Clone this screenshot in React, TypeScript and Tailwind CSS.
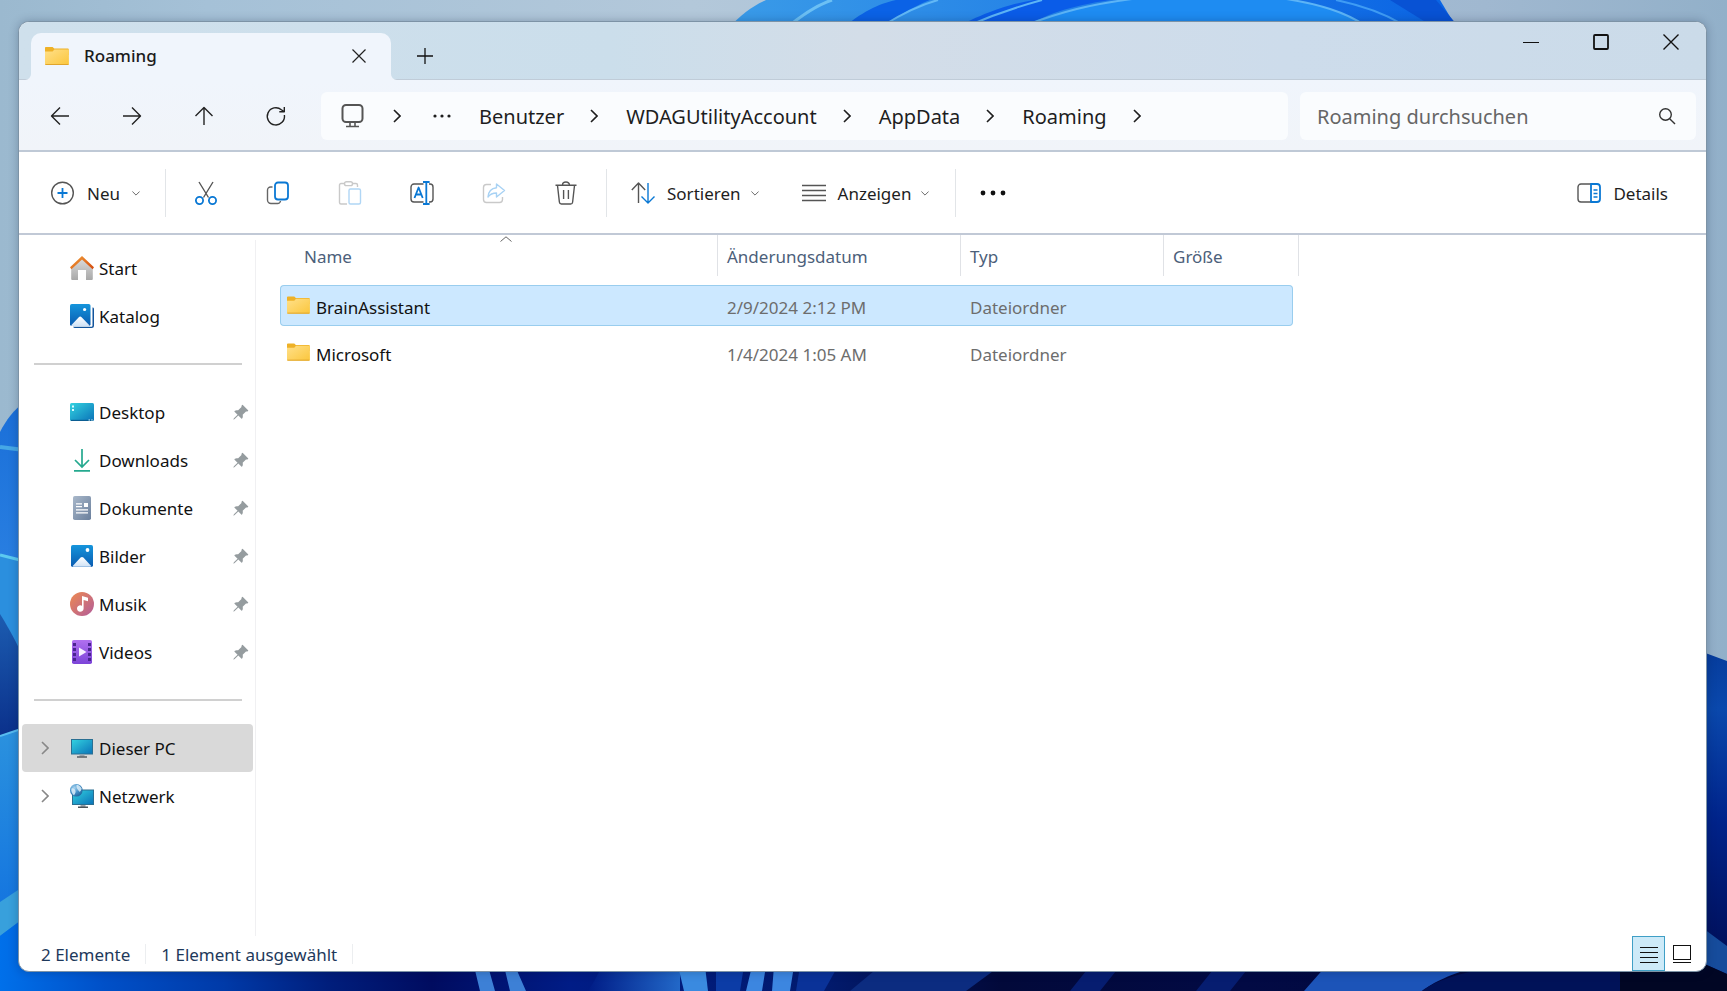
import { useState } from 'react';
import type { ReactNode } from 'react';
import { BsPinAngleFill } from 'react-icons/bs';
import clsx from 'clsx';

function Wallpaper() {
  return (
    <svg
      className="absolute inset-0 h-full w-full"
      viewBox="0 0 1727 991"
      preserveAspectRatio="none"
      aria-hidden="true"
    >
      <defs>
        <linearGradient id="sky" x1="0" y1="0" x2="1" y2="0">
          <stop offset="0" stopColor="#9bb9cf" />
          <stop offset="0.12" stopColor="#a5c1d7" />
          <stop offset="0.4" stopColor="#b3c8da" />
          <stop offset="0.86" stopColor="#a0b8d0" />
          <stop offset="1" stopColor="#92b0c9" />
        </linearGradient>
        <linearGradient id="floor" x1="0" y1="0" x2="1" y2="0">
          <stop offset="0" stopColor="#0070ea" />
          <stop offset="0.06" stopColor="#0050c8" />
          <stop offset="0.13" stopColor="#003aa8" />
          <stop offset="0.19" stopColor="#001e7c" />
          <stop offset="0.25" stopColor="#000c60" />
          <stop offset="0.33" stopColor="#001c86" />
          <stop offset="0.48" stopColor="#021a6c" />
          <stop offset="0.58" stopColor="#02093a" />
          <stop offset="0.72" stopColor="#020a44" />
          <stop offset="1" stopColor="#010838" />
        </linearGradient>
        <linearGradient id="petal" x1="0" y1="0" x2="1" y2="0">
          <stop offset="0" stopColor="#3a9be8" />
          <stop offset="1" stopColor="#0a64e4" />
        </linearGradient>
        <linearGradient id="petalLow" x1="0" y1="0" x2="1" y2="0">
          <stop offset="0" stopColor="#001c86" />
          <stop offset="1" stopColor="#2268c8" />
        </linearGradient>
        <linearGradient id="leftTop" x1="0" y1="0" x2="0" y2="1">
          <stop offset="0" stopColor="#1a6fd8" />
          <stop offset="0.3" stopColor="#2a80e2" />
          <stop offset="1" stopColor="#0066e0" />
        </linearGradient>
        <linearGradient id="leftDeep" x1="0" y1="0" x2="0" y2="1">
          <stop offset="0" stopColor="#1c5cb0" />
          <stop offset="1" stopColor="#0a2f8a" />
        </linearGradient>
        <linearGradient id="leftLow" x1="0" y1="0" x2="0" y2="1">
          <stop offset="0" stopColor="#2b92de" />
          <stop offset="1" stopColor="#0a68e0" />
        </linearGradient>
        <linearGradient id="rightDeep" x1="0" y1="0" x2="0" y2="1">
          <stop offset="0" stopColor="#063c9c" />
          <stop offset="0.17" stopColor="#0a48ac" />
          <stop offset="0.5" stopColor="#00238a" />
          <stop offset="1" stopColor="#000a4c" />
        </linearGradient>
      </defs>
      <rect width="1727" height="991" fill="url(#sky)" />

      {/* bloom above the window */}
      <path d="M726 30C742 14 752 6 766 0H1440L1458 30Z" fill="url(#petal)" />
      <path d="M784 30C805 12 820 4 832 0" stroke="#6cc0f4" strokeWidth="3" fill="none" />
      <path d="M840 30C862 12 878 4 896 0H930C910 8 894 18 882 30Z" fill="#0b62e6" />
      <path d="M884 25C905 12 920 5 938 0" stroke="#62b8f6" strokeWidth="2" fill="none" />
      <path d="M950 30C990 10 1010 4 1034 0H1110C1070 6 1045 14 1020 30Z" fill="#0a5ce8" />
      <path d="M970 25C1000 12 1020 6 1042 0" stroke="#5cb4f6" strokeWidth="2" fill="none" />
      <path d="M1024 26C1060 12 1090 4 1140 -2H1280C1320 4 1345 12 1366 26Z" fill="#1e8cf2" />
      <path d="M1024 26C1060 12 1090 4 1140 -2M1280 -2C1320 4 1345 12 1366 26" stroke="#5cb4f6" strokeWidth="2" fill="none" />
      <path d="M1336 0C1365 6 1385 14 1402 24" stroke="#3f9cf4" strokeWidth="2" fill="none" />
      <path d="M1390 0L1432 26H1458L1436 0Z" fill="#0852d4" />

      {/* left edge */}
      <path d="M0 432C6 420 14 410 24 402V991H0Z" fill="url(#leftTop)" />
      <path d="M0 447L24 450" stroke="#46a8e6" strokeWidth="4" />
      <path d="M0 555L24 561V660L0 618Z" fill="#2b8fde" />
      <path d="M0 555L24 561" stroke="#5ccaf0" strokeWidth="3" />
      <path d="M0 614C10 630 16 642 24 658V740H0Z" fill="url(#leftDeep)" />
      <path d="M0 736L24 728V991H0Z" fill="url(#leftLow)" />
      <path d="M0 736L24 728" stroke="#58bdf0" strokeWidth="2" />
      <path d="M0 902L24 886V918L0 936Z" fill="#38a0dc" />

      {/* bottom edge */}
      <path d="M0 936L24 918L24 966H1727V991H0Z" fill="url(#floor)" />
      <path d="M474 966H488L495 991H480ZM504 966H515L526 991H510Z" fill="#3d80d6" />
      <path d="M602 966H680V991H588C594 982 598 974 602 966Z" fill="url(#petalLow)" />
      <path d="M678 966H705L708 991H684Z" fill="#3a8ae0" />
      <path d="M716 966H744L740 991H716Z" fill="#0c3ca6" />
      <path d="M752 966H766L762 991H746ZM774 966H794L790 991H772Z" fill="#3c86e0" />
      <path d="M800 966H838L824 991H796Z" fill="#0a3298" />
      <path d="M880 966H1000L966 991H850Z" fill="#0c2c80" />
      <path d="M1090 966H1120L1100 991H1070ZM1216 966H1250L1230 991H1196Z" fill="#061d70" />
      <path d="M1326 966H1480C1450 974 1434 982 1422 991H1304Z" fill="#1c54b8" />
      <path d="M1478 970C1450 976 1434 982 1422 991H1640V966Z" fill="#001258" />

      {/* right edge */}
      <path d="M1700 651L1727 661V991H1700Z" fill="url(#rightDeep)" />
      <path d="M1700 926L1727 946V974L1700 962Z" fill="#164c9c" />
      <path d="M1700 962L1727 974V991H1620V966Z" fill="#010624" />
    </svg>
  );
}

function FolderIcon({ className }: { className?: string }) {
  return (
    <svg viewBox="0 0 24 18" className={className} aria-hidden="true">
      <defs>
        <linearGradient id="folder" x1="0" y1="0" x2="1" y2="1">
          <stop offset="0" stopColor="#ffe08a" />
          <stop offset="1" stopColor="#fbc63c" />
        </linearGradient>
      </defs>
      <path d="M0 1C0 .4.4 0 1 0h6.6L9.2 1.6H22.5c.8 0 1.3.5 1.3 1.2V8H0Z" fill="#eeb127" />
      <path d="M0 4.600h7.600L9.400 2.400H23c.6 0 .9.3.9.9V17c0 .6-.4 1-1 1H1c-.6 0-1-.4-1-1Z" fill="url(#folder)" />
      <path d="M.4 17.500h23" stroke="#e0a52c" />
    </svg>
  );
}

function Chevron({ className }: { className?: string }) {
  return (
    <svg viewBox="0 0 8 14" className={className} fill="none" stroke="currentColor" aria-hidden="true">
      <path d="M1 1l6 6-6 6" strokeWidth="1.6" />
    </svg>
  );
}

function ChevronDown() {
  return (
    <svg viewBox="0 0 10 6" className="h-[5px] w-2" fill="none" stroke="#666" aria-hidden="true">
      <path d="M.5.5L5 5 9.500.5" strokeWidth="1.2" />
    </svg>
  );
}

function Glyph({ children, className }: { children: ReactNode; className?: string }) {
  return (
    <svg
      viewBox="0 0 24 24"
      className={clsx('h-6 w-6 shrink-0', className)}
      fill="none"
      stroke="currentColor"
      strokeWidth="1.4"
      strokeLinejoin="round"
      aria-hidden="true"
    >
      {children}
    </svg>
  );
}

const navButtons = [
  { label: 'Zurück', icon: <path d="M21 12H3.500M12 3.500L3.500 12l8.500 8.500" /> },
  { label: 'Vorwärts', icon: <path d="M3 12h17.500M12 3.500l8.500 8.500-8.500 8.500" /> },
  { label: 'Nach oben', icon: <path d="M12 21V3.500M3.500 12L12 3.500l8.500 8.500" /> },
  {
    label: 'Aktualisieren',
    icon: <path d="M20.400 11a8.600 8.600 0 1 1-3-5.300l2.400 1.800M20.300 3v4.700h-5" />,
  },
];

const crumbs = ['Benutzer', 'WDAGUtilityAccount', 'AppData', 'Roaming'];

const commands = [
  {
    label: 'Ausschneiden',
    icon: (
      <>
        <path d="M5 1l9.500 15.500M19 1L9.500 16.500" stroke="#555" />
        <circle cx="5.500" cy="19.500" r="3.600" stroke="#0a78d4" strokeWidth="1.800" />
        <circle cx="18.500" cy="19.500" r="3.600" stroke="#0a78d4" strokeWidth="1.800" />
      </>
    ),
  },
  {
    label: 'Kopieren',
    icon: (
      <>
        <path d="M6.500 6H4.500a3 3 0 0 0-3 3v10a3.500 3.500 0 0 0 3.500 3.500h6.500a3 3 0 0 0 3-2.500" stroke="#666" />
        <rect x="9" y="1.500" width="13" height="17" rx="3" stroke="#0a78d4" strokeWidth="1.800" />
      </>
    ),
  },
  {
    label: 'Einfügen',
    icon: (
      <>
        <path d="M6.500 2.500H3a1.500 1.500 0 0 0-1.500 1.500v17.500A1.500 1.500 0 0 0 3 23h6M14.500 2.500H18a1.500 1.500 0 0 1 1.500 1.500v2" stroke="#c9c9c9" />
        <rect x="6.500" y=".8" width="8" height="3.800" rx="1.900" stroke="#c9c9c9" />
        <rect x="11" y="8" width="11.500" height="15" rx="1.500" stroke="#b0d6f5" />
      </>
    ),
  },
  {
    label: 'Umbenennen',
    icon: (
      <>
        <path d="M13.500 3H4a3 3 0 0 0-3 3v12a3 3 0 0 0 3 3h9.500M19 3h1a3 3 0 0 1 3 3v12a3 3 0 0 1-3 3h-1" stroke="#555" />
        <path d="M16.300 1v22M13 1h6.600M13 23h6.600" stroke="#0a78d4" strokeWidth="1.800" />
        <path d="M4.500 17L8.600 6.500 12.700 17M5.800 13.500h5.600" stroke="#0a78d4" strokeWidth="1.800" />
      </>
    ),
  },
  {
    label: 'Freigeben',
    icon: (
      <>
        <path d="M9 3.500H4.500a3 3 0 0 0-3 3v12a3 3 0 0 0 3 3h13a3 3 0 0 0 3-3V16" stroke="#c9c9c9" />
        <path d="M14.500 3l8 6.500-8 6.500v-4c-4 0-6.500 1.200-8.500 4 .4-5.500 3.500-8.800 8.500-9.300Z" stroke="#a8d2f4" />
      </>
    ),
  },
  {
    label: 'Löschen',
    icon: (
      <>
        <path d="M1.500 4.200h21M3.500 4.500l1.900 16.700A2 2 0 0 0 7.400 23h9.200a2 2 0 0 0 2-1.800l1.900-16.700M8.500 4a3.500 3 0 0 1 7 0M9.600 9v9M14.400 9v9" stroke="#555" />
      </>
    ),
  },
];

function PictureArt({ stacked }: { stacked?: boolean }) {
  return (
    <svg viewBox="0 0 24 24" className="h-6 w-6 shrink-0" aria-hidden="true">
      <defs>
        <linearGradient id="picture" x1="0" y1="0" x2="0" y2="1">
          <stop offset="0" stopColor="#1595dc" />
          <stop offset="1" stopColor="#0a5bb0" />
        </linearGradient>
        <linearGradient id="hill" x1="0" y1="0" x2="0" y2="1">
          <stop offset="0" stopColor="#ffffff" />
          <stop offset="1" stopColor="#cfe2f6" />
        </linearGradient>
      </defs>
      {stacked ? (
        <>
          <path d="M22.500 3.500c1 0 1.500.7 1.500 1.500v16.500a2.500 2.500 0 0 1-2.500 2.500H5a2 2 0 0 1-2-1.200h18.200c.8 0 1.300-.5 1.300-1.300Z" fill="#12549c" />
          <rect width="20.500" height="22" rx="1.800" fill="url(#picture)" />
          <path d="M1 21.500L8.800 13.200c.8-.9 2-.9 2.800 0l8 8.300c-.3.300-.7.500-1.200.5H2.200c-.5 0-.9-.2-1.200-.5Z" fill="url(#hill)" />
          <circle cx="14.600" cy="5.500" r="1.600" fill="#fff" />
        </>
      ) : (
        <>
          <rect x="1" y="1" width="22" height="22" rx="1.800" fill="url(#picture)" />
          <path d="M2.500 22.300L10.600 13.600c.8-.9 2-.9 2.800 0l8 8.700c-.3.300-.6.400-1 .4H3.500c-.4 0-.7-.1-1-.4Z" fill="url(#hill)" />
          <circle cx="17.500" cy="6" r="1.900" fill="#fff" />
        </>
      )}
    </svg>
  );
}

function HomeArt() {
  return (
    <svg viewBox="0 0 24 24" className="h-6 w-6 shrink-0" aria-hidden="true">
      <defs>
        <linearGradient id="wall" x1="0" y1="0" x2="0" y2="1">
          <stop offset="0" stopColor="#dedede" />
          <stop offset="1" stopColor="#a8a8a8" />
        </linearGradient>
        <linearGradient id="roof" x1="0" y1="0" x2="1" y2="1">
          <stop offset="0" stopColor="#f2a13a" />
          <stop offset="1" stopColor="#d4480c" />
        </linearGradient>
      </defs>
      <path d="M1.200 11.500L12 1.500l10.800 10V23a1 1 0 0 1-1 1H16V14H8v10H2.200a1 1 0 0 1-1-1Z" fill="url(#wall)" />
      <path d="M12 0l12 11.300-1.400 2L12 3.500 1.400 13.300l-1.400-2Z" fill="url(#roof)" />
    </svg>
  );
}

function DesktopArt() {
  return (
    <svg viewBox="0 0 24 24" className="h-6 w-6 shrink-0" aria-hidden="true">
      <defs>
        <linearGradient id="screen" x1="0" y1="0" x2="1" y2="1">
          <stop offset="0" stopColor="#33d3e0" />
          <stop offset="1" stopColor="#0a72b8" />
        </linearGradient>
      </defs>
      <rect y="3" width="24" height="18" rx="1.500" fill="url(#screen)" />
      <path d="M1 20.400h22" stroke="#0b5d92" strokeWidth="1.200" />
      <path d="M2 5.500h2v2H2zM2 9h2v2H2z" fill="#d8fbff" />
      <path d="M18.500 19.500h1.500v1h-1.500zM21.200 19.500h1.500v1h-1.500z" fill="#d8fbff" />
    </svg>
  );
}

function DownloadArt() {
  return (
    <svg viewBox="0 0 24 24" className="h-6 w-6 shrink-0" fill="none" stroke="#25a98f" strokeWidth="1.700" aria-hidden="true">
      <path d="M12 1v18M5 12l7 7 7-7M4 22.800h16" />
    </svg>
  );
}

function DocumentArt() {
  return (
    <svg viewBox="0 0 24 24" className="h-6 w-6 shrink-0" aria-hidden="true">
      <defs>
        <linearGradient id="doc" x1="0" y1="0" x2="1" y2="1">
          <stop offset="0" stopColor="#a9b8ca" />
          <stop offset="1" stopColor="#6a7f9c" />
        </linearGradient>
      </defs>
      <rect x="3" width="18" height="24" rx="1.800" fill="url(#doc)" />
      <path d="M6 7.800h6M6 10.600h6M6 13.800h12M6 16.800h12" stroke="#fff" strokeWidth="1.200" />
      <path d="M14 7h4v4h-4z" fill="#fff" />
    </svg>
  );
}

function MusicArt() {
  return (
    <svg viewBox="0 0 24 24" className="h-6 w-6 shrink-0" aria-hidden="true">
      <defs>
        <linearGradient id="disc" x1="0" y1="0" x2="1" y2="1">
          <stop offset="0" stopColor="#ee8a50" />
          <stop offset="1" stopColor="#b25c9a" />
        </linearGradient>
      </defs>
      <circle cx="12" cy="12" r="12" fill="url(#disc)" />
      <path d="M12 4l6 1.800V9.300L13.600 8v8.500A3.300 3.300 0 1 1 12 13.700Z" fill="#fff" />
    </svg>
  );
}

function VideoArt() {
  return (
    <svg viewBox="0 0 24 24" className="h-6 w-6 shrink-0" aria-hidden="true">
      <defs>
        <linearGradient id="film" x1="0" y1="0" x2="0" y2="1">
          <stop offset="0" stopColor="#b070f0" />
          <stop offset="1" stopColor="#7c44d8" />
        </linearGradient>
      </defs>
      <rect x="2" width="20" height="24" rx="1.800" fill="url(#film)" />
      <path
        d="M3 3h3v3H3zM3 8h3v3H3zM3 13h3v3H3zM3 18h3v3H3zM18 3h3v3h-3zM18 8h3v3h-3zM18 13h3v3h-3zM18 18h3v3h-3z"
        fill="#4a2590"
      />
      <path d="M9 7.500v9l7.500-4.500Z" fill="#f6eeff" />
    </svg>
  );
}

function ComputerArt() {
  return (
    <svg viewBox="0 0 24 24" className="h-6 w-6 shrink-0" aria-hidden="true">
      <rect x="1.500" y="3.500" width="21" height="14.500" fill="url(#screen)" stroke="#2a6f92" />
      <path d="M9.500 18.500h5v2h-5z" fill="#9aa3aa" />
      <path d="M7 21h10" stroke="#4c545a" strokeWidth="1.400" />
    </svg>
  );
}

function NetworkArt() {
  return (
    <svg viewBox="0 0 24 24" className="h-6 w-6 shrink-0" aria-hidden="true">
      <defs>
        <radialGradient id="globe" cx="0.35" cy="0.3" r="0.8">
          <stop offset="0" stopColor="#a8d4f0" />
          <stop offset="0.5" stopColor="#4390c8" />
          <stop offset="1" stopColor="#1c5f96" />
        </radialGradient>
      </defs>
      <rect x="2.500" y="6" width="21" height="14.500" fill="url(#screen)" stroke="#2a6f92" />
      <path d="M10.500 21h5v2h-5z" fill="#9aa3aa" />
      <path d="M8 23.300h10" stroke="#4c545a" strokeWidth="1.400" />
      <circle cx="6.300" cy="6.300" r="6.300" fill="url(#globe)" />
      <path d="M1.500 4.500c2-.8 3.500.5 4 2.500S4.500 10 4 11.500C2 9.500.7 7 1.500 4.500ZM6.500.8c2 .2 4 1.500 5.200 3.700-.5 2-1.200 2.500-2 3.500-1-1.500-3.800-3.500-3.200-7.200Z" fill="#e4f3fb" opacity=".8" />
    </svg>
  );
}

type Place = { name: string; icon: ReactNode; pinned?: boolean; expandable?: boolean };

const placeGroups: Place[][] = [
  [
    { name: 'Start', icon: <HomeArt /> },
    { name: 'Katalog', icon: <PictureArt stacked /> },
  ],
  [
    { name: 'Desktop', icon: <DesktopArt />, pinned: true },
    { name: 'Downloads', icon: <DownloadArt />, pinned: true },
    { name: 'Dokumente', icon: <DocumentArt />, pinned: true },
    { name: 'Bilder', icon: <PictureArt />, pinned: true },
    { name: 'Musik', icon: <MusicArt />, pinned: true },
    { name: 'Videos', icon: <VideoArt />, pinned: true },
  ],
  [
    { name: 'Dieser PC', icon: <ComputerArt />, expandable: true },
    { name: 'Netzwerk', icon: <NetworkArt />, expandable: true },
  ],
];

const files = [
  { name: 'BrainAssistant', date: '2/9/2024 2:12 PM', type: 'Dateiordner' },
  { name: 'Microsoft', date: '1/4/2024 1:05 AM', type: 'Dateiordner' },
];

function TitleBar() {
  return (
    <header className="flex h-[58px] shrink-0 items-start justify-between border-b border-[#c0ccd8] bg-[linear-gradient(90deg,#cfe0ec_0%,#cbdeeb_35%,#d3dde8_50%,#cddceb_75%,#cbdbe9_100%)]">
      <div className="flex pt-[11px] pl-3">
        <div className="relative flex h-[47px] w-[360px] items-center rounded-t-[10px] bg-[#f0f5fc] pr-[18px] pb-px pl-[14px]">
          <svg viewBox="0 0 6 6" className="absolute bottom-0 -left-[6px] h-[6px] w-[6px]" aria-hidden="true">
            <path d="M6 0v6H0A6 6 0 0 0 6 0Z" fill="#f0f5fc" />
          </svg>
          <svg viewBox="0 0 6 6" className="absolute -right-[6px] bottom-0 h-[6px] w-[6px]" aria-hidden="true">
            <path d="M0 0v6h6A6 6 0 0 1 0 0Z" fill="#f0f5fc" />
          </svg>
          <FolderIcon className="h-[18px] w-6" />
          <span className="ml-[15px] flex-1 text-[17px] font-medium text-[#1b1b1b]">Roaming</span>
          <button type="button" aria-label="Tab schließen" className="flex h-7 w-7 items-center justify-center">
            <svg viewBox="0 0 14 14" className="h-[14px] w-[14px]" fill="none" stroke="#222" strokeWidth="1.200">
              <path d="M.5.5l13 13M13.500.5l-13 13" />
            </svg>
          </button>
        </div>
        <button type="button" aria-label="Neuer Tab" className="ml-5 flex h-[46px] w-7 items-center justify-center">
          <svg viewBox="0 0 16 16" className="h-4 w-4" fill="none" stroke="#111" strokeWidth="1.300">
            <path d="M8 0v16M0 8h16" />
          </svg>
        </button>
      </div>
      <div className="flex">
        <button type="button" aria-label="Minimieren" className="flex h-10 w-[70px] items-center justify-center">
          <svg viewBox="0 0 16 16" className="h-4 w-4" fill="none" stroke="#111" strokeWidth="1.200">
            <path d="M0 8.500h16" />
          </svg>
        </button>
        <button type="button" aria-label="Maximieren" className="flex h-10 w-[70px] items-center justify-center">
          <svg viewBox="0 0 16 16" className="h-4 w-4" fill="none" stroke="#111" strokeWidth="1.800">
            <rect x="1" y="1" width="14" height="14" rx="1" />
          </svg>
        </button>
        <button type="button" aria-label="Schließen" className="flex h-10 w-[70px] items-center justify-center">
          <svg viewBox="0 0 16 16" className="h-4 w-4" fill="none" stroke="#111" strokeWidth="1.400">
            <path d="M.5.5l15 15M15.500.5l-15 15" />
          </svg>
        </button>
      </div>
    </header>
  );
}

function AddressBar() {
  return (
    <div className="flex h-[72px] shrink-0 items-center border-b-2 border-[#bfc9d6] bg-[linear-gradient(180deg,#f0f5fc,#f1f4f9)] pt-[2px] pr-[10px]">
      <nav className="flex w-[302px] shrink-0 gap-9 pl-[23px]" aria-label="Verlauf">
        {navButtons.map((button) => (
          <button key={button.label} type="button" aria-label={button.label} className="flex h-9 w-9 items-center justify-center text-[#222]">
            <Glyph>{button.icon}</Glyph>
          </button>
        ))}
      </nav>
      <nav className="flex h-12 flex-1 items-center rounded-md bg-[#fafcfe] pl-5 text-[20px] text-[#1e1e1e]" aria-label="Pfad">
        <svg viewBox="0 0 24 24" className="h-6 w-6 shrink-0 text-[#555]" fill="none" stroke="currentColor" strokeWidth="2" aria-hidden="true">
          <rect x="1.500" y="1" width="20" height="17" rx="3.500" />
          <path d="M9 18.500V22M14 18.500V22M5 22.500h13" strokeWidth="1.600" />
        </svg>
        <Chevron className="mr-8 ml-7 h-[14px] w-2" />
        <button type="button" aria-label="Weitere Ordner" className="mr-7">
          <svg viewBox="0 0 18 4" className="h-1 w-[18px]" fill="currentColor">
            <circle cx="2" cy="2" r="1.600" />
            <circle cx="9" cy="2" r="1.600" />
            <circle cx="16" cy="2" r="1.600" />
          </svg>
        </button>
        {crumbs.map((crumb) => (
          <span key={crumb} className="flex items-center">
            <a href="#" className="pt-[2px] whitespace-nowrap">
              {crumb}
            </a>
            <Chevron className="mr-7 ml-[26px] h-[14px] w-2" />
          </span>
        ))}
      </nav>
      <div className="ml-3 flex h-12 w-[396px] shrink-0 items-center rounded-md bg-[#fafcfe] pr-5 pl-[17px]">
        <input
          type="search"
          aria-label="Roaming durchsuchen"
          placeholder="Roaming durchsuchen"
          className="min-w-0 flex-1 bg-transparent pt-[2px] text-[20px] text-[#1e1e1e] outline-none placeholder:text-[#666]"
        />
        <svg viewBox="0 0 18 18" className="h-[18px] w-[18px]" fill="none" stroke="#333" strokeWidth="1.400" aria-hidden="true">
          <circle cx="7.500" cy="7.500" r="5.800" />
          <path d="M11.700 11.700l5.300 5.300" />
        </svg>
      </div>
    </div>
  );
}

function Divider() {
  return <span className="h-12 w-px shrink-0 bg-[#e2e5e8]" />;
}

function Toolbar() {
  return (
    <div className="flex h-[83px] shrink-0 items-center border-b-2 border-[#c1c9d6] pt-px pr-[38px] pl-8 text-[17px] text-[#1e1e1e]">
      <button type="button" className="flex w-[114px] shrink-0 items-center">
        <Glyph>
          <circle cx="11.500" cy="12" r="10.800" stroke="#555" />
          <path d="M11.500 7v10M6.500 12h10" stroke="#0a78d4" strokeWidth="1.800" />
        </Glyph>
        <span className="mx-3 pt-px">Neu</span>
        <ChevronDown />
      </button>
      <Divider />
      <div className="flex gap-9 pr-[10px] pl-[22px]">
        {commands.map((command) => (
          <button key={command.label} type="button" aria-label={command.label} className="flex h-9 w-9 items-center justify-center">
            <Glyph>{command.icon}</Glyph>
          </button>
        ))}
      </div>
      <div className="flex w-[13px] shrink-0 justify-end">
        <Divider />
      </div>
      <button type="button" className="ml-6 flex items-center">
        <Glyph>
          <path d="M7.500 22V2M.8 9l6.700-7 6.700 7" stroke="#555" />
          <path d="M17 2v20M10.500 15.500L17 22l6.500-6.500" stroke="#0a78d4" />
        </Glyph>
        <span className="mr-[10px] ml-3 pt-px">Sortieren</span>
        <ChevronDown />
      </button>
      <button type="button" className="ml-[43px] flex items-center">
        <Glyph>
          <path d="M0 4.500h24M0 9.500h24M0 14.500h24M0 19.500h24" stroke="#555" />
        </Glyph>
        <span className="mr-[10px] ml-3 pt-px">Anzeigen</span>
        <ChevronDown />
      </button>
      <span className="ml-[26px] flex">
        <Divider />
      </span>
      <button type="button" aria-label="Mehr anzeigen" className="ml-6">
        <svg viewBox="0 0 26 6" className="h-[6px] w-[26px]" fill="#111">
          <circle cx="3" cy="3" r="2.400" />
          <circle cx="13" cy="3" r="2.400" />
          <circle cx="23" cy="3" r="2.400" />
        </svg>
      </button>
      <button type="button" className="ml-auto flex items-center gap-3">
        <Glyph>
          <path d="M14 3H4a3 3 0 0 0-3 3v12a3 3 0 0 0 3 3h10" stroke="#555" />
          <path d="M14 3h6a3 3 0 0 1 3 3v12a3 3 0 0 1-3 3h-6Z" stroke="#0a78d4" strokeWidth="1.800" />
          <path d="M16.500 9h4M16.500 12.500h4M16.500 16h4" stroke="#0a78d4" />
        </Glyph>
        <span className="pt-px">Details</span>
      </button>
    </div>
  );
}

function Sidebar() {
  const [active, setActive] = useState('Dieser PC');

  return (
    <aside className="mt-[5px] w-[237px] shrink-0 border-r border-[#f0f0f2] pt-1 pr-[2px] pl-[3px] text-[17px] text-[#111]">
      {placeGroups.map((group, index) => (
        <div key={group[0].name}>
          {index > 0 && (
            <div className="flex h-12 items-center pr-[11px] pl-3">
              <hr className="w-full border-t-2 border-[#d0d0d0]" />
            </div>
          )}
          {group.map((place) => (
            <button
              key={place.name}
              type="button"
              onClick={() => setActive(place.name)}
              className={clsx(
                'flex h-12 w-full items-center rounded-sm pr-1 pl-[19px] text-left',
                active === place.name && 'bg-[#d9d9d9]',
              )}
            >
              <span className="w-[29px] shrink-0">
                {place.expandable && <Chevron className="h-[14px] w-2 text-[#888]" />}
              </span>
              {place.icon}
              <span className="ml-[5px] flex-1 pt-[2px]">{place.name}</span>
              {place.pinned && <BsPinAngleFill className="h-[17px] w-[17px] text-[#959c9f]" aria-hidden="true" />}
            </button>
          ))}
        </div>
      ))}
    </aside>
  );
}

function FileList() {
  const [selected, setSelected] = useState('BrainAssistant');

  return (
    <section className="relative flex-1 pl-6">
      <svg viewBox="0 0 12 6" className="absolute top-px left-[244px] h-[6px] w-3" fill="none" stroke="#666" aria-hidden="true">
        <path d="M.5 5.500L6 .8l5.500 4.700" />
      </svg>
      <table className="w-[1019px] table-fixed border-separate border-spacing-0 text-left text-[17px] text-[#6d6d6d]">
        <colgroup>
          <col className="w-[438px]" />
          <col className="w-[243px]" />
          <col className="w-[203px]" />
          <col className="w-[135px]" />
        </colgroup>
        <thead>
          <tr className="text-[#4c607a]">
            {['Name', 'Änderungsdatum', 'Typ', 'Größe'].map((heading, index) => (
              <th key={heading} scope="col" className="pb-[6px] font-normal">
                <div className={clsx('flex h-[41px] items-center border-r border-[#e0e2e6] pt-[2px]', index === 0 ? 'pl-6' : 'pl-[9px]')}>
                  {heading}
                </div>
              </th>
            ))}
          </tr>
        </thead>
        <tbody>
          {files.map((file) => {
            const cell = clsx(
              'flex h-[41px] items-center border-y pt-1',
              selected === file.name ? 'border-[#99cdee] bg-[#cce8ff]' : 'border-transparent',
            );
            return (
              <tr key={file.name} onClick={() => setSelected(file.name)}>
                <td className="py-[3px]">
                  <div className={clsx(cell, 'rounded-l-sm border-l pl-[6px] text-[#111]')}>
                    <FolderIcon className="mb-[5px] h-[18px] w-[23px]" />
                    <span className="ml-[6px]">{file.name}</span>
                  </div>
                </td>
                <td className="py-[3px]">
                  <div className={clsx(cell, 'pl-[9px]')}>{file.date}</div>
                </td>
                <td className="py-[3px]">
                  <div className={clsx(cell, 'pl-[9px]')}>{file.type}</div>
                </td>
                <td className="py-[3px] pr-[6px]">
                  <div className={clsx(cell, 'rounded-r-sm border-r')} />
                </td>
              </tr>
            );
          })}
        </tbody>
      </table>
    </section>
  );
}

function StatusBar() {
  return (
    <footer className="flex h-[35px] shrink-0 items-center pr-2 pl-[22px] text-[17px] text-[#1e395b]">
      <span className="pt-[2px]">2 Elemente</span>
      <span className="mx-[15px] h-5 w-px bg-[#eceef0]" />
      <span className="pt-[2px]">1 Element ausgewählt</span>
      <span className="mx-[15px] h-5 w-px bg-[#eceef0]" />
      <div className="ml-auto flex">
        <button type="button" aria-label="Detailansicht" className="flex h-[35px] w-[33px] items-center justify-center border border-[#3f9fc6] bg-[#cdeaf8] pt-[2px]">
          <svg viewBox="0 0 18 16" className="h-4 w-[18px]" stroke="#111" strokeWidth="1">
            <path d="M0 .5h18M0 5.500h18M0 10.500h18M0 15.500h18" />
          </svg>
        </button>
        <button type="button" aria-label="Große Symbole" className="flex h-[35px] w-[33px] items-center justify-center">
          <svg viewBox="0 0 18 18" className="h-[18px] w-[18px]" fill="none" stroke="#111" strokeWidth="1">
            <rect x=".5" y=".5" width="17" height="14" />
            <path d="M0 17.500h18" />
          </svg>
        </button>
      </div>
    </footer>
  );
}

export default function App() {
  return (
    <div className="relative flex h-screen overflow-hidden pt-[21px] pr-5 pb-[19px] pl-[18px] font-['Noto_Sans','Open_Sans',sans-serif]">
      <Wallpaper />
      <main className="relative flex min-w-0 flex-1 flex-col overflow-hidden rounded-[11px] border border-[#7d93a6] bg-white shadow-[0_0_10px_rgba(0,20,50,0.25)]">
        <TitleBar />
        <AddressBar />
        <Toolbar />
        <div className="flex min-h-0 flex-1">
          <Sidebar />
          <FileList />
        </div>
        <StatusBar />
      </main>
    </div>
  );
}
